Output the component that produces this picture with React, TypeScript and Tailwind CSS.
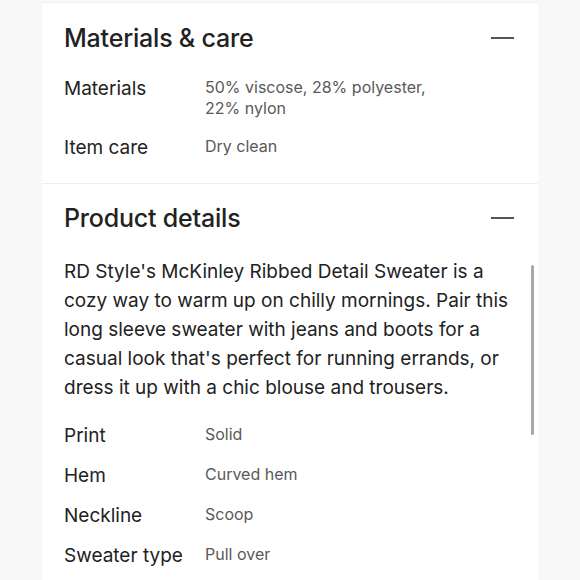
import { Minus } from "lucide-react";

const materials = [
  { label: "Materials", value: "50% viscose, 28% polyester,\n22% nylon" },
  { label: "Item care", value: "Dry clean" },
];

const details = [
  { label: "Print", value: "Solid" },
  { label: "Hem", value: "Curved hem" },
  { label: "Neckline", value: "Scoop" },
  { label: "Sweater type", value: "Pull over" },
];

const description = [
  "RD Style's McKinley Ribbed Detail Sweater is a",
  "cozy way to warm up on chilly mornings. Pair this",
  "long sleeve sweater with jeans and boots for a",
  "casual look that's perfect for running errands, or",
  "dress it up with a chic blouse and trousers.",
];

function SectionHeader({ title }: { title: string }) {
  return (
    <div className="flex items-center justify-between">
      <h2 className="text-[25px] leading-[32px] font-medium tracking-[-0.2px] text-[#222222]">{title}</h2>
      <div className="h-[2px] w-[23px] bg-[#555555] mr-[2px]" aria-hidden />
    </div>
  );
}

function Row({ label, value }: { label: string; value: string }) {
  return (
    <div className="flex items-start">
      <div className="w-[141px] shrink-0 text-[19px] leading-[24px] text-[#222222]">{label}</div>
      <div className="text-[16px] leading-[21px] text-[#595959] whitespace-pre-line">{value}</div>
    </div>
  );
}

export default function App() {
  return (
    <div
      className="w-[580px] h-[580px] overflow-hidden bg-[#f8f8f8] pt-[2px]"
      style={{ fontFamily: "Inter, 'Noto Sans', sans-serif" }}
    >
      <div className="mx-[42px] h-full bg-white border-t border-[#efefef]">
        <section className="pl-[22px] pr-[22px] pt-[19px] pb-[23px] border-b border-[#eeeeee]">
          <SectionHeader title="Materials & care" />
          <div className="mt-[23px] flex flex-col gap-[17px]">
            {materials.map((m) => (
              <Row key={m.label} label={m.label} value={m.value} />
            ))}
          </div>
        </section>

        <section className="relative pl-[22px] pr-[22px] pt-[18px]">
          <SectionHeader title="Product details" />
          <p className="mt-[23px] text-[19px] leading-[29px] text-[#222222]">
            {description.map((line) => (
              <span key={line} className="block whitespace-nowrap">
                {line}
              </span>
            ))}
          </p>
          <div className="mt-[22px] flex flex-col gap-[16px]">
            {details.map((d) => (
              <Row key={d.label} label={d.label} value={d.value} />
            ))}
          </div>
          <div className="absolute right-[4px] top-[81px] h-[170px] w-[3px] rounded-full bg-[#a9a9a9]" />
        </section>
      </div>
    </div>
  );
}
